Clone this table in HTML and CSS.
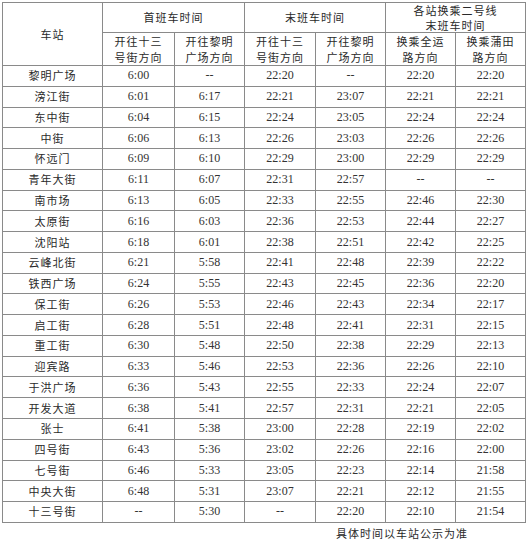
FILE: index.html
```html
<!DOCTYPE html>
<html lang="zh-CN">
<head>
<meta charset="utf-8">
<link rel="stylesheet" href="styles.css">
</head>
<body>
<div class="page">
<table class="timetable">
<colgroup>
<col class="c-station"><col class="c-a"><col class="c-b"><col class="c-c"><col class="c-d"><col class="c-e"><col class="c-f">
</colgroup>
<thead>
<tr class="h1">
<th rowspan="2" class="zh">车站</th>
<th colspan="2" class="zh">首班车时间</th>
<th colspan="2" class="zh">末班车时间</th>
<th colspan="2" class="zh tight">各站换乘二号线<br>末班车时间</th>
</tr>
<tr class="h2">
<th class="zh">开往十三<br>号街方向</th>
<th class="zh">开往黎明<br>广场方向</th>
<th class="zh">开往十三<br>号街方向</th>
<th class="zh">开往黎明<br>广场方向</th>
<th class="zh">换乘全运<br>路方向</th>
<th class="zh">换乘蒲田<br>路方向</th>
</tr>
</thead>
<tbody>
<tr><td class="zh">黎明广场</td><td>6:00</td><td>--</td><td>22:20</td><td>--</td><td>22:20</td><td>22:20</td></tr>
<tr><td class="zh">滂江街</td><td>6:01</td><td>6:17</td><td>22:21</td><td>23:07</td><td>22:21</td><td>22:21</td></tr>
<tr><td class="zh">东中街</td><td>6:04</td><td>6:15</td><td>22:24</td><td>23:05</td><td>22:24</td><td>22:24</td></tr>
<tr><td class="zh">中街</td><td>6:06</td><td>6:13</td><td>22:26</td><td>23:03</td><td>22:26</td><td>22:26</td></tr>
<tr><td class="zh">怀远门</td><td>6:09</td><td>6:10</td><td>22:29</td><td>23:00</td><td>22:29</td><td>22:29</td></tr>
<tr><td class="zh">青年大街</td><td>6:11</td><td>6:07</td><td>22:31</td><td>22:57</td><td>--</td><td>--</td></tr>
<tr><td class="zh">南市场</td><td>6:13</td><td>6:05</td><td>22:33</td><td>22:55</td><td>22:46</td><td>22:30</td></tr>
<tr><td class="zh">太原街</td><td>6:16</td><td>6:03</td><td>22:36</td><td>22:53</td><td>22:44</td><td>22:27</td></tr>
<tr><td class="zh">沈阳站</td><td>6:18</td><td>6:01</td><td>22:38</td><td>22:51</td><td>22:42</td><td>22:25</td></tr>
<tr><td class="zh">云峰北街</td><td>6:21</td><td>5:58</td><td>22:41</td><td>22:48</td><td>22:39</td><td>22:22</td></tr>
<tr><td class="zh">铁西广场</td><td>6:24</td><td>5:55</td><td>22:43</td><td>22:45</td><td>22:36</td><td>22:20</td></tr>
<tr><td class="zh">保工街</td><td>6:26</td><td>5:53</td><td>22:46</td><td>22:43</td><td>22:34</td><td>22:17</td></tr>
<tr><td class="zh">启工街</td><td>6:28</td><td>5:51</td><td>22:48</td><td>22:41</td><td>22:31</td><td>22:15</td></tr>
<tr><td class="zh">重工街</td><td>6:30</td><td>5:48</td><td>22:50</td><td>22:38</td><td>22:29</td><td>22:13</td></tr>
<tr><td class="zh">迎宾路</td><td>6:33</td><td>5:46</td><td>22:53</td><td>22:36</td><td>22:26</td><td>22:10</td></tr>
<tr><td class="zh">于洪广场</td><td>6:36</td><td>5:43</td><td>22:55</td><td>22:33</td><td>22:24</td><td>22:07</td></tr>
<tr><td class="zh">开发大道</td><td>6:38</td><td>5:41</td><td>22:57</td><td>22:31</td><td>22:21</td><td>22:05</td></tr>
<tr><td class="zh">张士</td><td>6:41</td><td>5:38</td><td>23:00</td><td>22:28</td><td>22:19</td><td>22:02</td></tr>
<tr><td class="zh">四号街</td><td>6:43</td><td>5:36</td><td>23:02</td><td>22:26</td><td>22:16</td><td>22:00</td></tr>
<tr><td class="zh">七号街</td><td>6:46</td><td>5:33</td><td>23:05</td><td>22:23</td><td>22:14</td><td>21:58</td></tr>
<tr><td class="zh">中央大街</td><td>6:48</td><td>5:31</td><td>23:07</td><td>22:21</td><td>22:12</td><td>21:55</td></tr>
<tr><td class="zh">十三号街</td><td>--</td><td>5:30</td><td>--</td><td>22:20</td><td>22:10</td><td>21:54</td></tr>
</tbody>
</table>
<p class="note">具体时间以车站公示为准</p>
</div>
</body>
</html>
```
FILE: styles.css
```css
html, body {
  margin: 0;
  padding: 0;
  background: #fff;
}
.page {
  padding: 2px 0 0 2px;
}
.timetable {
  border-collapse: collapse;
  table-layout: fixed;
  width: 524px;
  font-family: "Liberation Serif", "Times New Roman", serif;
  font-size: 12px;
  color: #333;
}
.c-station { width: 100px; }
.c-a { width: 72px; }
.c-b { width: 70px; }
.c-c { width: 71px; }
.c-d { width: 70px; }
.c-e { width: 70px; }
.c-f { width: 70px; }
.timetable th,
.timetable td {
  border: 1px solid #8a8a8a;
  padding: 0;
  text-align: center;
  vertical-align: middle;
  font-weight: normal;
  overflow: visible;
}
.zh {
  font-family: "Noto Sans CJK SC", "Liberation Serif", sans-serif;
  font-size: 11px;
  letter-spacing: 1px;
  color: #2a2a2a;
}
.h1 th { height: 29px; line-height: 14.5px; }
.h2 th { height: 32px; line-height: 16px; }
.timetable tbody td { height: 19.77px; line-height: 13px; }
.note {
  margin: 0;
  padding: 3px 58px 0 0;
  text-align: right;
  font-family: "Noto Sans CJK SC", sans-serif;
  font-size: 11px;
  letter-spacing: 1px;
  color: #2a2a2a;
  line-height: 14px;
}
```
